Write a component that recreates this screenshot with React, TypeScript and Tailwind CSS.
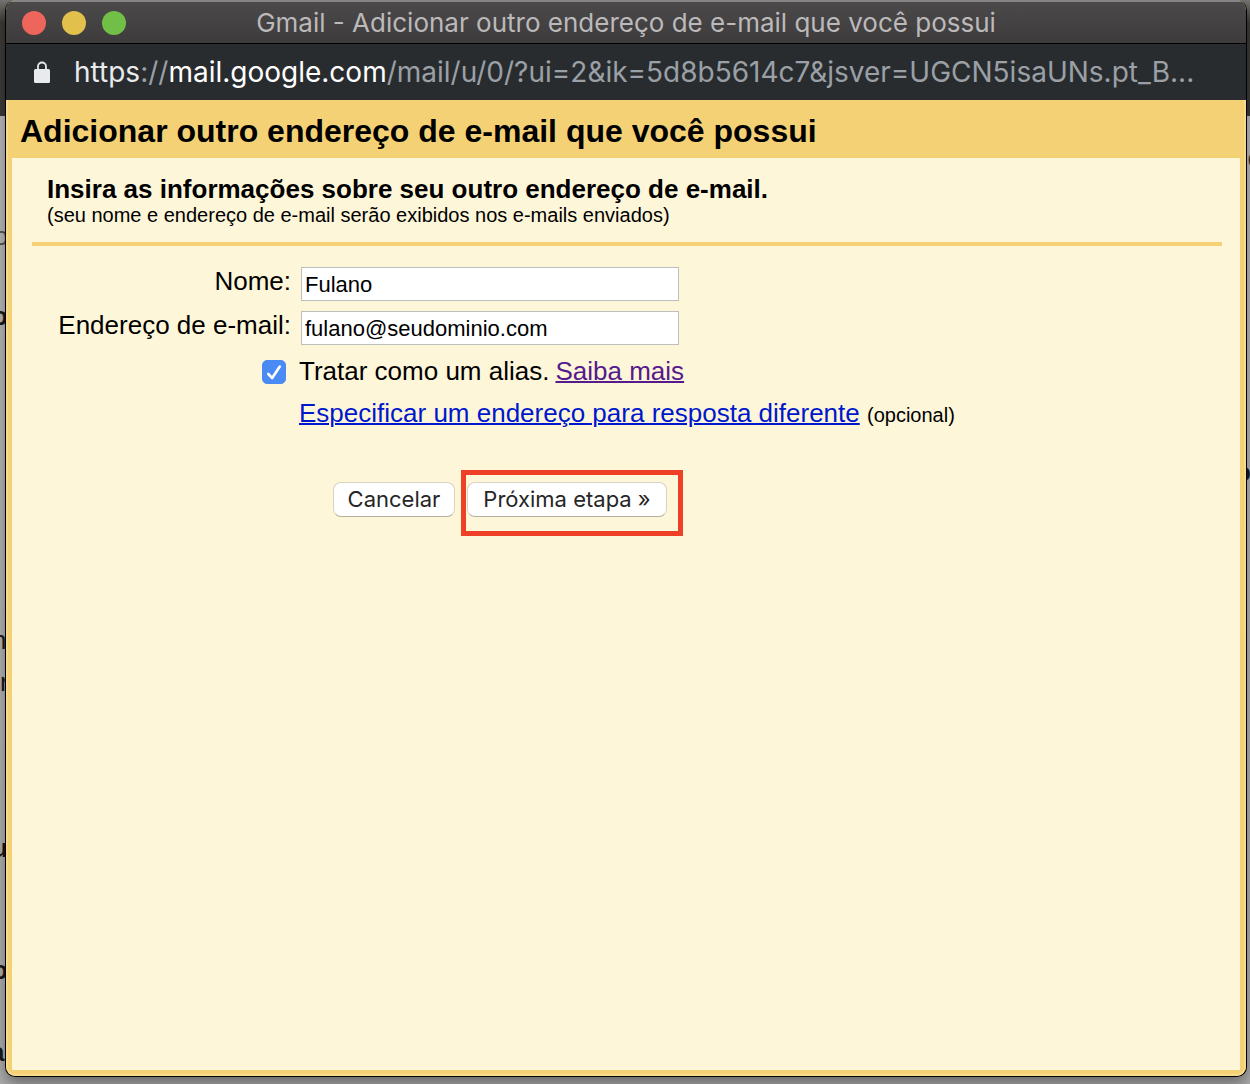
import React, { useState } from 'react';

type TextFieldProps = {
  id: string;
  label: string;
  type: string;
  value: string;
  onChange: (value: string) => void;
};

const TextField: React.FC<TextFieldProps> = ({ id, label, type, value, onChange }) => (
  <>
    <label htmlFor={id} className="text-right text-[26px] leading-7">
      {label}
    </label>
    <input
      id={id}
      type={type}
      value={value}
      onChange={(e) => onChange(e.target.value)}
      className="h-[34px] w-[378px] border border-[#bdbdbd] bg-white px-[3px] pt-[2px] text-[22px] outline-none"
    />
  </>
);

const TitleBar: React.FC = () => (
  <header className="flex h-[44px] items-center border-t-2 border-b border-t-[#858484] border-b-black bg-linear-to-b from-[#4b494a] to-[#3d3b3c] px-4">
    <div className="flex gap-4">
      <button type="button" aria-label="Fechar" className="size-6 rounded-full bg-[#ee655b]" />
      <button type="button" aria-label="Minimizar" className="size-6 rounded-full bg-[#e1c04c]" />
      <button type="button" aria-label="Ampliar" className="size-6 rounded-full bg-[#71bf46]" />
    </div>
    <h1 className="flex-1 pr-[104px] text-center font-['Inter'] text-[26px] leading-8 whitespace-nowrap text-[#bbb9ba]">
      Gmail - Adicionar outro endereço de e-mail que você possui
    </h1>
  </header>
);

const AddressBar: React.FC = () => (
  <div className="flex h-14 items-center bg-[#292c2f] pl-7 font-['Inter'] text-[28px] leading-8 text-[#9aa0a6]">
    <svg viewBox="0 0 16 22" className="h-[22px] w-4 shrink-0" aria-hidden="true">
      <path d="M4 9V5.500a4 4 0 0 1 8 0V9" fill="none" stroke="#e8eaed" strokeWidth="1.8" />
      <rect y="8" width="16" height="14" rx="1.500" fill="#e8eaed" />
    </svg>
    <p className="ml-6 whitespace-nowrap">
      <span className="text-[#e8eaed]">https</span>://
      <span className="text-white">mail.google.com</span>
      /mail/u/0/?ui=2&amp;ik=5d8b5614c7&amp;jsver=UGCN5isaUNs.pt_B...
    </p>
  </div>
);

const AliasForm: React.FC = () => {
  const [name, setName] = useState('Fulano');
  const [email, setEmail] = useState('fulano@seudominio.com');
  const [alias, setAlias] = useState(true);

  return (
    <form className="pt-[21px]" onSubmit={(e) => e.preventDefault()}>
      <div className="grid grid-cols-[259px_1fr] gap-x-[10px] gap-y-[10px] pl-5">
        <TextField id="name" label="Nome:" type="text" value={name} onChange={setName} />
        <TextField
          id="email"
          label="Endereço de e-mail:"
          type="text"
          value={email}
          onChange={setEmail}
        />
      </div>

      <div className="mt-3 flex items-start pl-[250px] text-[26px] leading-7">
        <span className="mt-[3px] grid size-6">
          <input
            id="alias"
            type="checkbox"
            checked={alias}
            onChange={(e) => setAlias(e.target.checked)}
            className="peer col-start-1 row-start-1 size-6 appearance-none rounded-[5px] border border-[#8a8a8a] bg-white checked:border-[#4a8af4] checked:bg-[#4a8af4]"
          />
          <svg
            viewBox="0 0 24 24"
            className="pointer-events-none col-start-1 row-start-1 hidden size-6 peer-checked:block"
            aria-hidden="true"
          >
            <path
              d="M6.300 14 10.200 18 17.800 6.500"
              fill="none"
              stroke="#fff"
              strokeWidth="2.6"
              strokeLinecap="round"
              strokeLinejoin="round"
            />
          </svg>
        </span>
        <label htmlFor="alias" className="ml-[13px]">
          Tratar como um alias.
        </label>
        <a href="#saiba-mais" className="ml-[6px] text-[#551a8b] underline decoration-2">
          Saiba mais
        </a>
      </div>

      <p className="mt-[14px] pl-[287px] text-[26px] leading-7">
        <a href="#resposta" className="text-[#0018cc] underline decoration-2">
          Especificar um endereço para resposta diferente
        </a>{' '}
        <span className="text-[20px]">(opcional)</span>
      </p>

      <div className="mt-[41px] flex pl-[321px] font-['Inter'] text-[22px] text-[#262626]">
        <button
          type="button"
          className="mt-3 h-[35px] w-[122px] rounded-[8px] border border-[#d9d3c1] border-b-[#b5b09e] bg-white"
        >
          Cancelar
        </button>
        <div className="ml-[6px] border-5 border-[#ee4026] pt-[7px] pr-[11px] pb-[14px] pl-px">
          <button
            type="submit"
            className="block h-[35px] w-[200px] rounded-[8px] border border-[#d9d3c1] border-b-[#b5b09e] bg-white"
          >
            Próxima etapa »
          </button>
        </div>
      </div>
    </form>
  );
};

// Inbox text that peeks out beside the popup
const Inbox: React.FC = () => (
  <div
    aria-hidden="true"
    className="absolute inset-0 overflow-hidden bg-linear-to-b from-[#c0c0c0] to-[#b0b0b0] text-[26px] leading-8 text-[#1a1a1a]"
  >
    <div className="h-[116px] bg-linear-to-b from-[#777573] to-[#3e3c38] to-20%" />
    <span className="absolute top-[220px] -left-[6px] text-[#555]">o</span>
    <span className="absolute top-[300px] -left-[8px] font-bold">o</span>
    <span className="absolute top-[624px] -left-[8px]">n</span>
    <span className="absolute top-[666px] left-0">r</span>
    <span className="absolute top-[832px] -left-[8px] font-bold">u</span>
    <span className="absolute top-[954px] -left-[8px] font-bold">o</span>
    <span className="absolute top-[1036px] -left-[10px] font-bold">a</span>
    <span className="absolute top-[142px] -right-[12px] text-[#444]">o</span>
    <span className="absolute top-[456px] -right-[1px] font-bold">o</span>
  </div>
);

export default function App() {
  return (
    <div className="relative flex min-h-screen flex-col pr-[3px] pb-[7px] pl-[5px] font-['Liberation_Sans',Arial,sans-serif] text-black">
      <Inbox />
      <main className="relative flex flex-1 flex-col overflow-hidden rounded-[10px] border border-t-0 border-black bg-[#f4d175] shadow-[0_8px_16px_#00000066]">
        <TitleBar />
        <AddressBar />
        <div className="flex flex-1 flex-col rounded-b-[9px] border-x-2 border-b-2 border-[#f8da8e]">
          <h2 className="px-3 pt-[13px] pb-[9px] text-[32px] leading-9 font-bold">
            Adicionar outro endereço de e-mail que você possui
          </h2>
          <section className="mx-1 mb-1 flex-1 bg-[#fef6d9]">
            <div className="mr-[18px] ml-5 border-b-4 border-[#f4d175] px-[15px] pt-4 pb-4">
              <h3 className="text-[26px] leading-[30px] font-bold">
                Insira as informações sobre seu outro endereço de e-mail.
              </h3>
              <p className="text-[20px] leading-[22px]">
                (seu nome e endereço de e-mail serão exibidos nos e-mails enviados)
              </p>
            </div>
            <AliasForm />
          </section>
        </div>
      </main>
    </div>
  );
}
